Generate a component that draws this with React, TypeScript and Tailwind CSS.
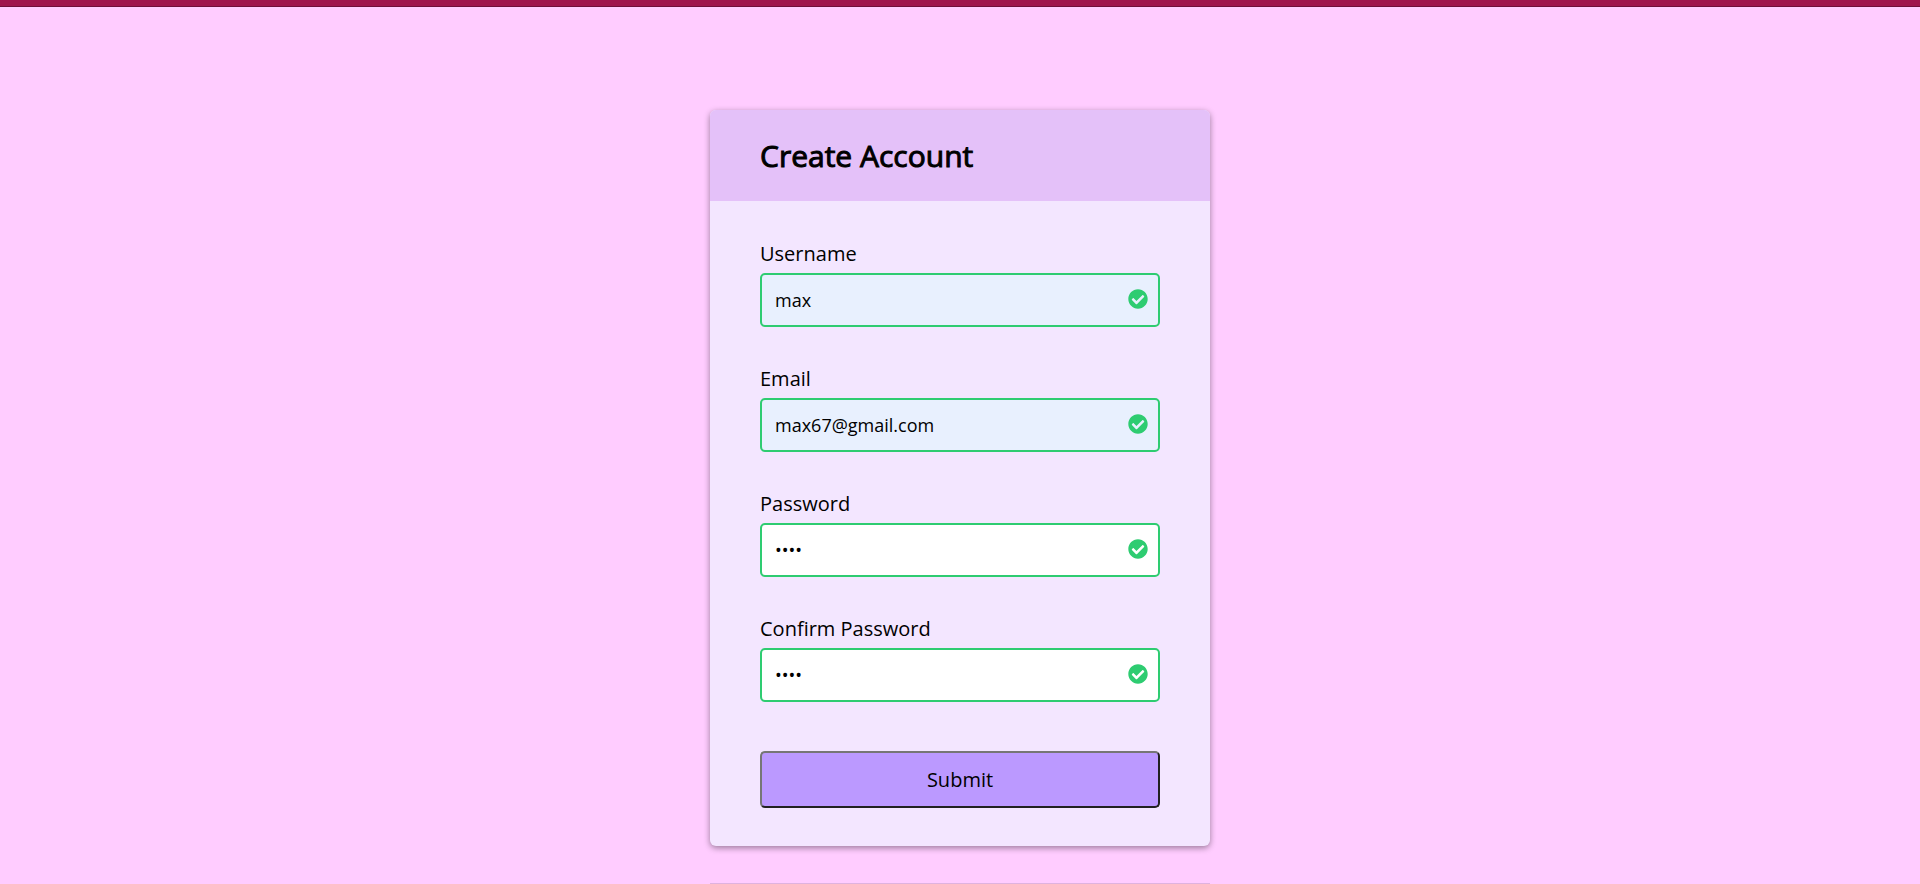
import { useState } from 'react';

type FieldProps = {
  id: string;
  label: string;
  type: 'text' | 'email' | 'password';
  initial: string;
  autofilled?: boolean;
};

function CheckCircle() {
  return (
    <svg viewBox="0 0 512 512" className="pointer-events-none absolute right-3 top-4 size-5 fill-[#2ecc71]" aria-hidden="true">
      <path d="M504 256c0 136.967-111.033 248-248 248S8 392.967 8 256 119.033 8 256 8s248 111.033 248 248zM227.314 387.314l184-184c6.248-6.248 6.248-16.379 0-22.627l-22.627-22.627c-6.248-6.249-16.379-6.249-22.628 0L216 308.118l-70.059-70.059c-6.248-6.248-16.379-6.248-22.628 0l-22.627 22.627c-6.248 6.248-6.248 16.379 0 22.627l104 104c6.249 6.249 16.379 6.249 22.628.001z" />
    </svg>
  );
}

function Field({ id, label, type, initial, autofilled = false }: FieldProps) {
  const [value, setValue] = useState(initial);
  return (
    <div className="flex flex-col gap-1.5">
      <label htmlFor={id} className="text-[20px] leading-[26px]">
        {label}
      </label>
      <div className="relative">
        <input
          id={id}
          type={type}
          value={value}
          onChange={(e) => setValue(e.target.value)}
          className={`block h-[54px] w-full rounded-[5px] border-2 border-[#2ecc71] px-[13px] text-[18px] outline-none ${
            autofilled ? 'bg-[#e8f0fe]' : 'bg-white'
          }`}
        />
        <CheckCircle />
      </div>
    </div>
  );
}

export default function App() {
  return (
    <div className="flex min-h-screen flex-col bg-[#ffccff] font-['Open_Sans',sans-serif] font-normal text-black">
      <div className="h-[7px] border-b border-[#6f0f3a] bg-[#9f154d]" />
      <main className="mx-auto mt-[103px] w-full max-w-[500px]">
        <section className="overflow-hidden rounded-md bg-[#f3e6ff] shadow-[0_2px_6px_rgba(0,0,0,0.4)]">
          <header className="bg-[#e4c1f9] px-[50px] pb-[23px] pt-6">
            <h2 className="text-[30px] leading-[44px] [-webkit-text-stroke:1px_black]">Create Account</h2>
          </header>
          <form className="px-[50px] pb-[38px] pt-10" onSubmit={(e) => e.preventDefault()}>
            <div className="flex flex-col gap-[39px]">
              <Field id="username" label="Username" type="text" initial="max" autofilled />
              <Field id="email" label="Email" type="email" initial="max67@gmail.com" autofilled />
              <Field id="password" label="Password" type="password" initial="1234" />
              <Field id="confirm" label="Confirm Password" type="password" initial="1234" />
            </div>
            <button
              type="submit"
              className="mt-[49px] block h-[57px] w-full rounded-[5px] border-2 border-b-[#212121] border-l-[#767676] border-r-[#212121] border-t-[#767676] bg-[#bb99ff] text-[20px]"
            >
              Submit
            </button>
          </form>
        </section>
        <div className="mt-[37px] h-px bg-[#dfb2df]" />
      </main>
    </div>
  );
}
